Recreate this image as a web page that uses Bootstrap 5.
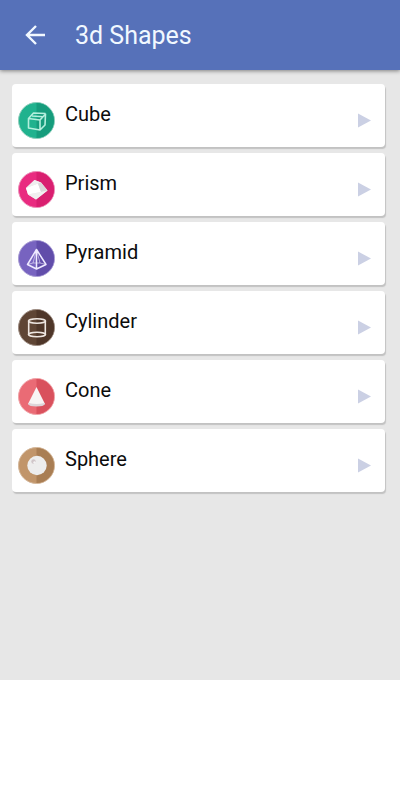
<!DOCTYPE html>
<html lang="en">
<head>
<meta charset="utf-8">
<meta name="viewport" content="width=device-width, initial-scale=1">
<title>3d Shapes</title>
<link href="https://cdn.jsdelivr.net/npm/bootstrap@5.3.0/dist/css/bootstrap.min.css" rel="stylesheet">
<style>
body { font-family: Roboto, "Liberation Sans", sans-serif; background: #fff; }
.screen { min-height: 85vh; background: #e7e7e7; }
.app-bar { min-height: 70px; padding: 0 22px; gap: 27px; background: #5671b9; box-shadow: 0 1px 4px rgba(0,0,0,.45); }
.app-title { padding-top: 2px; font-size: 25px; line-height: 30px; color: #f1f8ff; }
.back-btn { line-height: 0; }
.shape-list { padding: 14px 15px 14px 12px; gap: 6px; }
.shape-row { min-height: 63px; padding: 0 14px 0 6px; gap: 10px; background: #fff; color: #0c0c0c; border-radius: 4px; box-shadow: 1px 2px 1px #c2c2c2; }
.shape-row svg { margin-top: 18px; }
.shape-name { padding-top: 18px; font-size: 20px; line-height: 24px; }
</style>
<script src="https://cdn.jsdelivr.net/npm/bootstrap@5.3.0/dist/js/bootstrap.bundle.min.js"></script>
</head>
<body>
<div class="screen d-flex flex-column">
  <header class="app-bar d-flex align-items-center">
    <button type="button" class="back-btn btn p-0 border-0" aria-label="Back">
      <svg width="26" height="26" viewBox="0 0 26 26" fill="none" stroke="#f1f8ff" stroke-width="2.4"><path d="M23 13H5M14 4l-9 9 9 9"/></svg>
    </button>
    <h1 class="app-title fw-normal mb-0">3d Shapes</h1>
  </header>
  <main>
    <ul class="shape-list list-unstyled d-flex flex-column mb-0">
      <li><a href="#cube" class="shape-row d-flex align-items-start text-decoration-none">
        <svg width="37" height="37" viewBox="0 0 37 37" aria-hidden="true"><circle cx="18.5" cy="18.5" r="18" fill="#20b28e" stroke="#8fcdbb" stroke-width="1"/><path d="M18.5 1a17.5 17.5 0 0 1 0 35z" fill="#169c7c"/><g fill="none" stroke="#b4efdd" stroke-width="1.6" stroke-linejoin="round"><path d="M10.500 16.500L22 18v10l-11.500-2zM22 18l5.500-6-.5 11-5 5M10.500 16.500l5-5.500 12 .5M14 14l11 .7"/></g></svg>
        <span class="shape-name flex-grow-1">Cube</span>
        <svg width="14" height="37" viewBox="0 0 14 37" aria-hidden="true"><path d="M1 11.500l13 7-13 7z" fill="#cbd0e4"/></svg>
      </a></li>
      <li><a href="#prism" class="shape-row d-flex align-items-start text-decoration-none">
        <svg width="37" height="37" viewBox="0 0 37 37" aria-hidden="true"><circle cx="18.5" cy="18.5" r="18" fill="#e92b80" stroke="#eb8fb7" stroke-width="1"/><path d="M18.5 1a17.5 17.5 0 0 1 0 35z" fill="#d91f70"/><path d="M8 17l8.500-8 6.500 2.500 6.500 8L18 28.500l-8-5z" fill="#e9e7e8"/><path d="M8 17l12-4.500 3 8.500-13 2.500z" fill="#fff"/><path d="M8 17l8.500-8 6.500 2.500-3 1z" fill="#f0eeef"/><path d="M20 12.500l3-1 6.500 8L23 21z" fill="#dbd7da"/><path d="M10 23.500L23 21l6.500-1.500L18 28.500z" fill="#f1eff0"/></svg>
        <span class="shape-name flex-grow-1">Prism</span>
        <svg width="14" height="37" viewBox="0 0 14 37" aria-hidden="true"><path d="M1 11.500l13 7-13 7z" fill="#cbd0e4"/></svg>
      </a></li>
      <li><a href="#pyramid" class="shape-row d-flex align-items-start text-decoration-none">
        <svg width="37" height="37" viewBox="0 0 37 37" aria-hidden="true"><circle cx="18.5" cy="18.5" r="18" fill="#7763c0" stroke="#a79bd3" stroke-width="1"/><path d="M18.5 1a17.5 17.5 0 0 1 0 35z" fill="#614daa"/><g fill="none" stroke="#eeeaff" stroke-width="1.5" stroke-linejoin="round"><path d="M18.500 9.500l-9 15 9 4.500 9.500-4.500zM18.500 9.500V29"/><path d="M18.500 9.500L15 23M18.500 9.500L22 23M9.500 24.500l5.500-1.500h7l6 1.500" stroke-width=".8" opacity=".75"/></g></svg>
        <span class="shape-name flex-grow-1">Pyramid</span>
        <svg width="14" height="37" viewBox="0 0 14 37" aria-hidden="true"><path d="M1 11.500l13 7-13 7z" fill="#cbd0e4"/></svg>
      </a></li>
      <li><a href="#cylinder" class="shape-row d-flex align-items-start text-decoration-none">
        <svg width="37" height="37" viewBox="0 0 37 37" aria-hidden="true"><circle cx="18.5" cy="18.5" r="18" fill="#5f4535" stroke="#9c8b81" stroke-width="1"/><path d="M18.5 1a17.5 17.5 0 0 1 0 35z" fill="#4e3629"/><g fill="none" stroke="#eee6e1" stroke-width="1.6"><ellipse cx="19" cy="12" rx="8.5" ry="2.2"/><ellipse cx="19" cy="25.500" rx="8.5" ry="2.2"/><path d="M10.700 12v13.500M27.300 12v13.500"/></g></svg>
        <span class="shape-name flex-grow-1">Cylinder</span>
        <svg width="14" height="37" viewBox="0 0 14 37" aria-hidden="true"><path d="M1 11.500l13 7-13 7z" fill="#cbd0e4"/></svg>
      </a></li>
      <li><a href="#cone" class="shape-row d-flex align-items-start text-decoration-none">
        <svg width="37" height="37" viewBox="0 0 37 37" aria-hidden="true"><circle cx="18.5" cy="18.5" r="18" fill="#ea6b75" stroke="#efa2a7" stroke-width="1"/><path d="M18.5 1a17.5 17.5 0 0 1 0 35z" fill="#d9515d"/><path d="M18.500 9l8.500 17q-8.500 4-17 0z" fill="#f8f4f4"/><path d="M11 25q7.500 2 15.500 0l.5 1q-1 2.500-8.500 2.500T10 26z" fill="#ddd5d9"/></svg>
        <span class="shape-name flex-grow-1">Cone</span>
        <svg width="14" height="37" viewBox="0 0 14 37" aria-hidden="true"><path d="M1 11.500l13 7-13 7z" fill="#cbd0e4"/></svg>
      </a></li>
      <li><a href="#sphere" class="shape-row d-flex align-items-start text-decoration-none">
        <svg width="37" height="37" viewBox="0 0 37 37" aria-hidden="true"><circle cx="18.5" cy="18.5" r="18" fill="#c1956a" stroke="#d3b699" stroke-width="1"/><path d="M18.5 1a17.5 17.5 0 0 1 0 35z" fill="#a97e54"/><circle cx="19" cy="18.500" r="9.700" fill="#ededed"/><circle cx="15.500" cy="14.500" r="2.200" fill="#d0c6c9"/><circle cx="16.500" cy="15.500" r="1.200" fill="#f4f4f4"/></svg>
        <span class="shape-name flex-grow-1">Sphere</span>
        <svg width="14" height="37" viewBox="0 0 14 37" aria-hidden="true"><path d="M1 11.500l13 7-13 7z" fill="#cbd0e4"/></svg>
      </a></li>
    </ul>
  </main>
</div>
</body>
</html>
